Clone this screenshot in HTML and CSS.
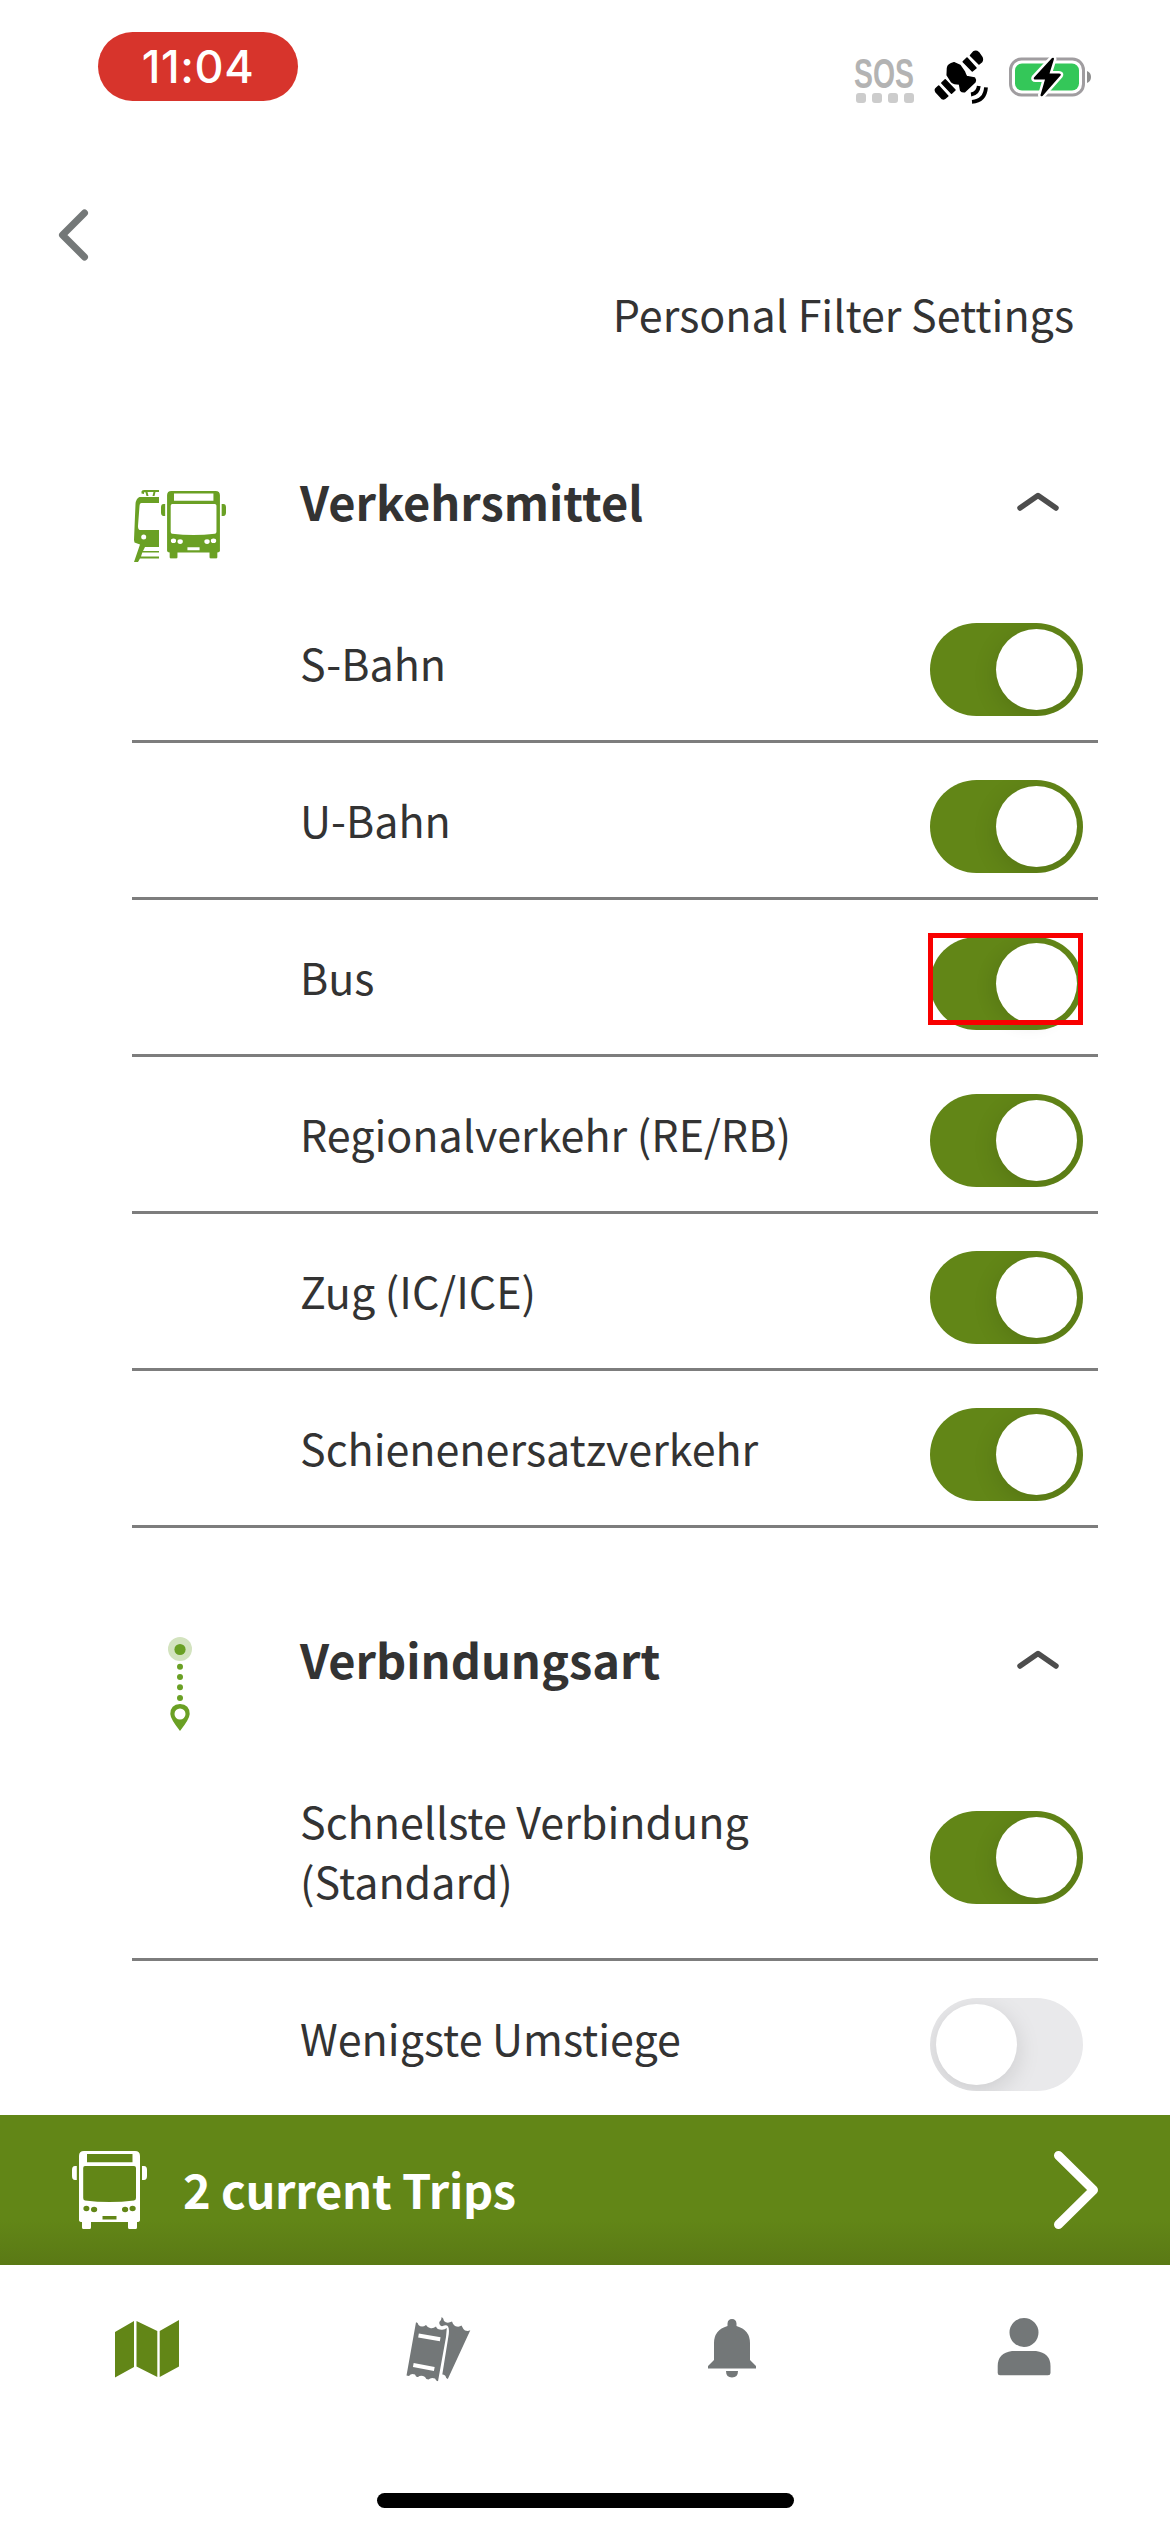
FILE: index.html
```html
<!DOCTYPE html>
<html lang="de">
<head>
<meta charset="utf-8">
<title>Personal Filter Settings</title>
<link rel="stylesheet" href="styles.css">
</head>
<body>
<svg width="0" height="0" class="defs" aria-hidden="true">
  <symbol id="bus" viewBox="0 0 75 78">
    <path fill="currentColor" fill-rule="evenodd" d="M12 0H63Q68 0 68 5V69Q68 71 65 71V76.500Q65 78 63.500 78H57.500Q56 78 56 76.500V71H19V76.500Q19 78 17.500 78H11.500Q10 78 10 76.500V71Q7 71 7 69V5Q7 0 12 0ZM15 3V11.300H60.500V3ZM13 15Q11.200 15 11.200 17V47Q11.200 49.200 13 49.500Q37.500 52.500 62 49.500Q64 49.200 64 47V17Q64 15 62 15ZM11.400 57.500a3 2.700 0 1 0 6 0a3 2.700 0 1 0 -6 0ZM19 58.500a3.100 2.700 0 1 0 6.200 0a3.100 2.700 0 1 0 -6.200 0ZM50 58.500a3.100 2.700 0 1 0 6.200 0a3.100 2.700 0 1 0 -6.200 0ZM57.500 57.500a3.100 2.700 0 1 0 6.200 0a3.100 2.700 0 1 0 -6.200 0ZM30.500 65V68.600H44.500V65Z"/>
    <path fill="currentColor" d="M4.800 15V29H3Q0 29 0 25V19Q0 15 3 15ZM70 15V29H72Q75 29 75 25V19Q75 15 72 15Z"/>
  </symbol>
</svg>
<div class="phone">
  <header class="status">
    <div class="clock">11:04</div>
    <div class="status-icons">
      <div class="sos"><span class="sos-label">SOS</span><span class="dots"><i></i><i></i><i></i><i></i></span></div>
      <svg class="satellite" width="56" height="56" viewBox="0 0 56 56">
        <g stroke="#000" stroke-width="1.500" stroke-linejoin="round">
          <path d="M36.500 5.500L39.500 2Q42 .5 44.500 2.500L48 7.500Q49 10 47.500 12L45 14Z"/>
          <path d="M29.200 11.700L33 8L42 18L38.300 21Z"/>
          <path d="M7.800 33L11.200 29.700L21 40L17.500 43.300Z"/>
          <path d="M4.700 36L2 38.500Q.7 40 2 42L8 48.500Q10 49.500 11.500 48L13.800 46Z"/>
          <path d="M13.500 18Q14 14 20 12.700L26 15.500L30.500 22Q31.500 25 32.500 26.500L40.500 28Q42 30 41 32L30.700 41.700Q28 42 26.700 40.500L25.500 34Q20 34 17.700 32L13.200 25Z"/>
        </g>
        <path d="M37 44.500q7-1 7.800-8.500M38 51.800q13-1 14-14.500" fill="none" stroke="#000" stroke-width="3.800"/>
      </svg>
      <svg class="battery" width="83" height="42" viewBox="0 0 83 42">
        <rect x="1.500" y="3" width="73" height="36" rx="11" fill="none" stroke="#a09da0" stroke-width="3"/>
        <path d="M78 15q4 1.500 4 6t-4 6z" fill="#8e8e8e"/>
        <rect x="6" y="7.500" width="64" height="27" rx="7" fill="#34c759"/>
        <path d="M43 2L25 21.500Q24 23.500 26.500 23.500H36L31.500 39Q31.500 41 33.500 40L51.500 19.500Q52.500 17.500 50 17.500H40.500L45 3Q45 1 43 2Z" fill="#000" stroke="#fff" stroke-width="5" paint-order="stroke"/>
      </svg>
    </div>
  </header>

  <div class="topbar">
    <svg class="back" width="32" height="54" viewBox="0 0 32 54"><path d="M26.500 5L4.500 27L26.500 49" fill="none" stroke="#747878" stroke-width="7" stroke-linecap="round" stroke-linejoin="round"/></svg>
    <h1 class="title">Personal Filter Settings</h1>
  </div>

  <main class="content">
    <section class="group">
      <div class="group-head">
        <svg class="group-icon" width="96" height="76" viewBox="0 0 96 76">
          <g fill="#6aa024">
            <path d="M9.500 4.500V2.500Q9.500 1 12 1H27V3H23.500L22.500 7H20.500L21.500 3H15.500L16.500 7H14.500L13.500 3.200H12V5Z"/>
            <path fill-rule="evenodd" d="M7.500 8H27V14H9.500Q7.700 14 7.500 17L6 37Q5.900 41 8 41H27V58H13L11 62H27V63.500H10.300L9 67.500H27V69.500H8L6 73H2L8 55.500L2.500 53.500L2 51L3.500 15Q4 9.500 7.500 8ZM9.200 48a2.500 2.500 0 1 0 5 0a2.500 2.500 0 1 0 -5 0Z"/>
          </g>
          <use href="#bus" x="29" y="1.700" width="65" height="68" color="#6aa024"/>
        </svg>
        <h2>Verkehrsmittel</h2>
        <svg class="caret" width="42" height="20" viewBox="0 0 42 20"><path d="M3 16L21 3.500L39 16" fill="none" stroke="#4d4d4d" stroke-width="5.500" stroke-linecap="round" stroke-linejoin="round"/></svg>
      </div>
      <div class="row"><span>S-Bahn</span><span class="toggle on"></span></div>
      <div class="row"><span>U-Bahn</span><span class="toggle on"></span></div>
      <div class="row"><span>Bus</span><span class="toggle on marked"></span></div>
      <div class="row"><span>Regionalverkehr (RE/RB)</span><span class="toggle on"></span></div>
      <div class="row"><span>Zug (IC/ICE)</span><span class="toggle on"></span></div>
      <div class="row"><span>Schienenersatzverkehr</span><span class="toggle on"></span></div>
    </section>
    <section class="group">
      <div class="group-head">
        <svg class="group-icon" width="96" height="100" viewBox="0 0 96 100">
          <circle cx="48" cy="14" r="12" fill="#d3e3bf"/>
          <g fill="#6aa024">
            <circle cx="48" cy="14.500" r="5.600"/>
            <circle cx="48" cy="31.700" r="3"/><circle cx="48" cy="42" r="3"/><circle cx="48" cy="52.300" r="3"/><circle cx="48" cy="63" r="3"/>
            <path fill-rule="evenodd" d="M48 69Q57.700 69.500 57.700 79Q57.500 84 48 96Q38.500 84 38.300 79Q38.300 69.500 48 69ZM42.500 79a5.500 5.500 0 1 0 11 0a5.500 5.500 0 1 0 -11 0Z"/>
          </g>
        </svg>
        <h2>Verbindungsart</h2>
        <svg class="caret" width="42" height="20" viewBox="0 0 42 20"><path d="M3 16L21 3.500L39 16" fill="none" stroke="#4d4d4d" stroke-width="5.500" stroke-linecap="round" stroke-linejoin="round"/></svg>
      </div>
      <div class="row"><span>Schnellste Verbindung<br>(Standard)</span><span class="toggle on"></span></div>
      <div class="row"><span>Wenigste Umstiege</span><span class="toggle"></span></div>
    </section>
  </main>

  <div class="trips">
    <svg class="trips-bus" width="75" height="78"><use href="#bus" width="75" height="78"/></svg>
    <span class="trips-label">2 current Trips</span>
    <svg class="trips-next" width="50" height="86" viewBox="0 0 50 86"><path d="M7.500 8.500L42.500 43L7.500 77.500" fill="none" stroke="#fff" stroke-width="9" stroke-linecap="round" stroke-linejoin="round"/></svg>
  </div>

  <nav class="tabs">
    <svg width="64" height="66" viewBox="0 0 64 66"><path fill="#628617" d="M0 15L19 4V50L0 60.500ZM21.500 4L42.300 14V60L21.500 49.500ZM44.700 14L64 3V49.500L44.700 60Z"/></svg>
    <svg width="66" height="66" viewBox="0 0 66 66">
      <path fill="#737778" d="M10 5.300Q12 5.500 12.500 8Q16 11 20 8Q22 11 24 11Q27 12 30 9.500Q31 12.500 34 12.500Q38 13.500 40.800 11L40 20L32 64.200Q30 64 29 61.500Q25 60 22.500 62.500Q20 62.500 19 60Q15 57.500 12 60Q10 60.500 9 57.500Q5 56 3 59L0.500 58.500Z"/>
      <path d="M12.500 18.500L34.200 22.200M7.300 48L28.300 52" stroke="#fff" stroke-width="4" fill="none"/>
      <path fill="#737778" d="M35.700 0Q37.500 1 38 4Q41 7 46 4.500Q47 8 49 9Q53 10.500 55.500 8.500Q57 12 59 13.500Q62 14.500 64.300 13.300L41.800 62Q40 62 39.500 59Q38 57 36.300 57.500L42.800 17Q43.500 9.500 41 8.500Q39 8 36 9.300Q33 8.500 33.300 5Q35.500 3.500 35.700 0Z"/>
    </svg>
    <svg width="50" height="66" viewBox="0 0 50 66"><path fill="#737778" d="M20.500 9V6.500Q20.800 2 25 2Q29.200 2 29.500 6.500V9Q43 13 43 26V43L49 49V51.500H1V49L7 43V26Q7 13 20.500 9ZM19 54H31Q31 60.500 25 60.500Q19 60.500 19 54Z"/></svg>
    <svg width="54" height="66" viewBox="0 0 54 66"><path fill="#737778" d="M12.500 15.500a14.500 14.500 0 1 0 29 0a14.500 14.500 0 1 0 -29 0ZM15 34H39Q53.500 36 53.500 49V56Q53.500 58.300 51 58.300H3Q.7 58.300 .7 56V49Q.7 36 15 34Z"/></svg>
  </nav>
  <div class="home"></div>
</div>
</body>
</html>
```
FILE: styles.css
```css
*, *::before, *::after { box-sizing: border-box; }

body {
  margin: 0;
  background: #fff;
  color: #333;
  font-family: "Noto Sans CJK JP", "Noto Sans CJK SC", "Noto Sans", sans-serif;
}

svg { display: block; flex: none; }
.defs { display: none; }

.phone {
  display: flex;
  flex-direction: column;
  width: 1170px;
  height: 2532px;
  overflow: hidden;
  background: #fff;
}

/* status bar */
.status {
  display: flex;
  justify-content: space-between;
  align-items: flex-start;
  height: 205px;
  padding: 32px 78px 0 98px;
}

.clock {
  width: 200px;
  height: 69px;
  border-radius: 35px;
  background: #d7342c;
  color: #fff;
  font: 500 45px/70px Inter, sans-serif;
  letter-spacing: .6px;
  text-align: center;
}

.status-icons {
  display: flex;
  align-items: flex-start;
}

.sos { display: flex; flex-direction: column; width: 62px; margin: 21px 17px 0 0; }
.sos-label {
  height: 40px;
  color: #b3b3b3;
  font: 700 43px/40px "Liberation Sans", sans-serif;
  transform: scaleX(.66);
  transform-origin: 0 0;
}
.dots { display: flex; gap: 6px; padding-left: 2px; }
.dots i { width: 10px; height: 10px; border-radius: 3px; background: #ccc; }

.satellite { margin: 18px 19px 0 1px; }
.battery { margin-top: 24px; }

/* header */
.topbar {
  display: flex;
  flex-direction: column;
  height: 231px;
  padding: 3px 96px 0 58px;
}
.title {
  align-self: flex-end;
  margin: 21px 0 0;
  font-size: 43px;
  font-weight: 400;
  line-height: 60px;
}

/* filter groups */
.content {
  height: 1679px;
  overflow: hidden;
  padding: 0 72px 0 132px;
}
.group { margin-bottom: 66px; }
.group-head {
  display: flex;
  align-items: flex-start;
  height: 150px;
  padding: 34px 39px 0 0;
}
.group-icon { margin: 19px 72px 0 0; }
.group:nth-child(2) .group-icon { margin-top: 7px; }
.group-head h2 {
  flex: 1;
  margin: 1px 0 0;
  font-size: 47px;
  font-weight: 700;
  line-height: 60px;
}
.caret { margin-top: 22px; }

.row {
  display: flex;
  align-items: center;
  justify-content: space-between;
  min-height: 157px;
  padding: 46px 15px 48px 168px;
  border-bottom: 3px solid #7d7d7d;
  font-size: 43px;
  line-height: 60px;
}

.toggle {
  position: relative;
  flex: none;
  display: flex;
  width: 153px;
  height: 93px;
  margin: -23px 0 -38px;
  padding: 6px;
  border-radius: 47px;
  background: #e9e9eb;
  overflow: hidden;
}
.toggle::before {
  content: "";
  width: 81px;
  height: 81px;
  border-radius: 50%;
  background: #fff;
  box-shadow: 0 6px 24px rgba(0, 0, 0, .13);
}
.toggle.on { justify-content: flex-end; background: #628617; }
.toggle.marked { overflow: visible; }
.toggle.marked::before { box-shadow: -7px 3px 16px rgba(0, 0, 0, .08); }
.toggle.marked::after {
  content: "";
  position: absolute;
  left: -2px;
  top: -4px;
  width: 155px;
  height: 92px;
  border: 5px solid #f80000;
}

/* current trips banner */
.trips {
  display: flex;
  align-items: center;
  height: 150px;
  padding: 0 69px 0 72px;
  background: linear-gradient(#628617 0, #628617 105px, #5a7915 150px);
  color: #fff;
}
.trips-label {
  flex: 1;
  padding: 0 0 2px 36px;
  font-size: 47px;
  font-weight: 700;
  letter-spacing: -.25px;
  line-height: 60px;
}

/* tab bar */
.tabs {
  display: grid;
  grid-template-columns: repeat(4, 1fr);
  justify-items: center;
  align-items: start;
  height: 228px;
  padding: 52px 0 0 1px;
}

.home {
  align-self: center;
  flex: none;
  width: 417px;
  height: 15px;
  border-radius: 8px;
  background: #000;
}
```
